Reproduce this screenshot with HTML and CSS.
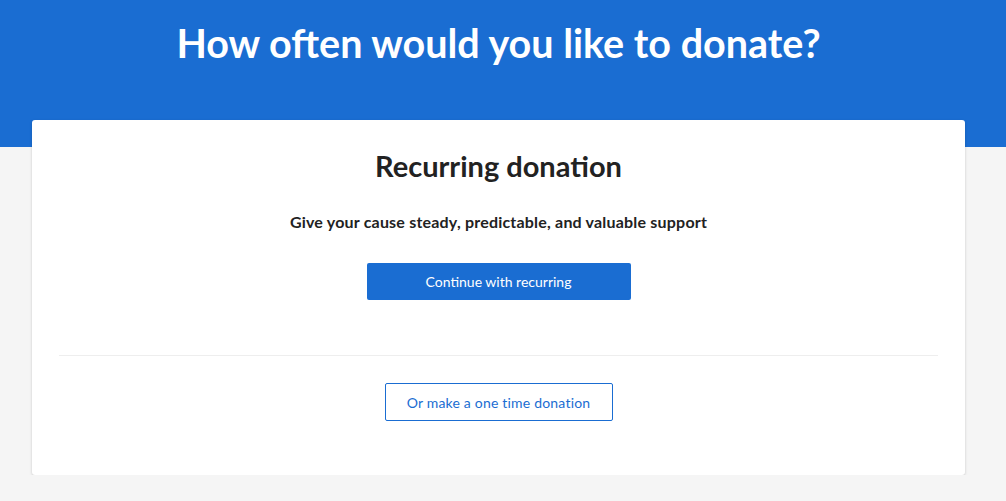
FILE: index.html
```html
<!DOCTYPE html>
<html>
<head>
<meta charset="utf-8">
<link rel="stylesheet" href="styles.css">
</head>
<body>
<header class="hero">
  <h1 class="hero-title">How often would you like to donate?</h1>
</header>
<main class="wrap">
  <section class="card">
    <h2 class="card-title">Recurring donation</h2>
    <p class="card-sub">Give your cause steady, predictable, and valuable support</p>
    <button class="btn btn-primary">Continue with recurring</button>
    <hr class="divider">
    <button class="btn btn-outline">Or make a one time donation</button>
  </section>
</main>
</body>
</html>
```
FILE: styles.css
```css
html, body {
  margin: 0;
  padding: 0;
  background: #f5f5f5;
  font-family: "Lato", "Open Sans", sans-serif;
  color: #222;
}
.hero {
  background: #1a6dd2;
  height: 147px;
  padding: 18px 41px 0 32px;
  box-sizing: border-box;
  text-align: center;
}
.hero-title {
  margin: 0;
  color: #fff;
  font-size: 39.5px;
  font-weight: 700;
  line-height: 50px;
}
.wrap {
  margin: -27px 41px 0 32px;
  position: relative;
}
.card {
  background: #fff;
  border-radius: 3px;
  box-shadow: 0 1px 3px rgba(0,0,0,0.18);
  padding: 30px 27px 54px;
  display: flex;
  flex-direction: column;
  align-items: center;
}
.card-title {
  margin: 0;
  font-size: 29px;
  font-weight: 700;
  line-height: 32px;
  color: #222;
}
.card-sub {
  margin: 30px 0 0;
  font-size: 16px;
  font-weight: 700;
  letter-spacing: 0.2px;
  line-height: 20px;
  color: #222;
}
.btn {
  font-family: inherit;
  font-size: 14px;
  border-radius: 2px;
  cursor: pointer;
  box-sizing: border-box;
}
.btn-primary {
  margin-top: 31px;
  width: 264px;
  height: 37px;
  background: #1a6dd2;
  border: none;
  color: #fff;
}
.divider {
  align-self: stretch;
  border: 0;
  border-top: 1px solid #eeeeee;
  margin: 55px 0 0;
}
.btn-outline {
  margin-top: 27px;
  width: 228px;
  height: 38px;
  background: #fff;
  border: 1px solid #1a6dd2;
  color: #1a6dd2;
  letter-spacing: 0.2px;
}
```
